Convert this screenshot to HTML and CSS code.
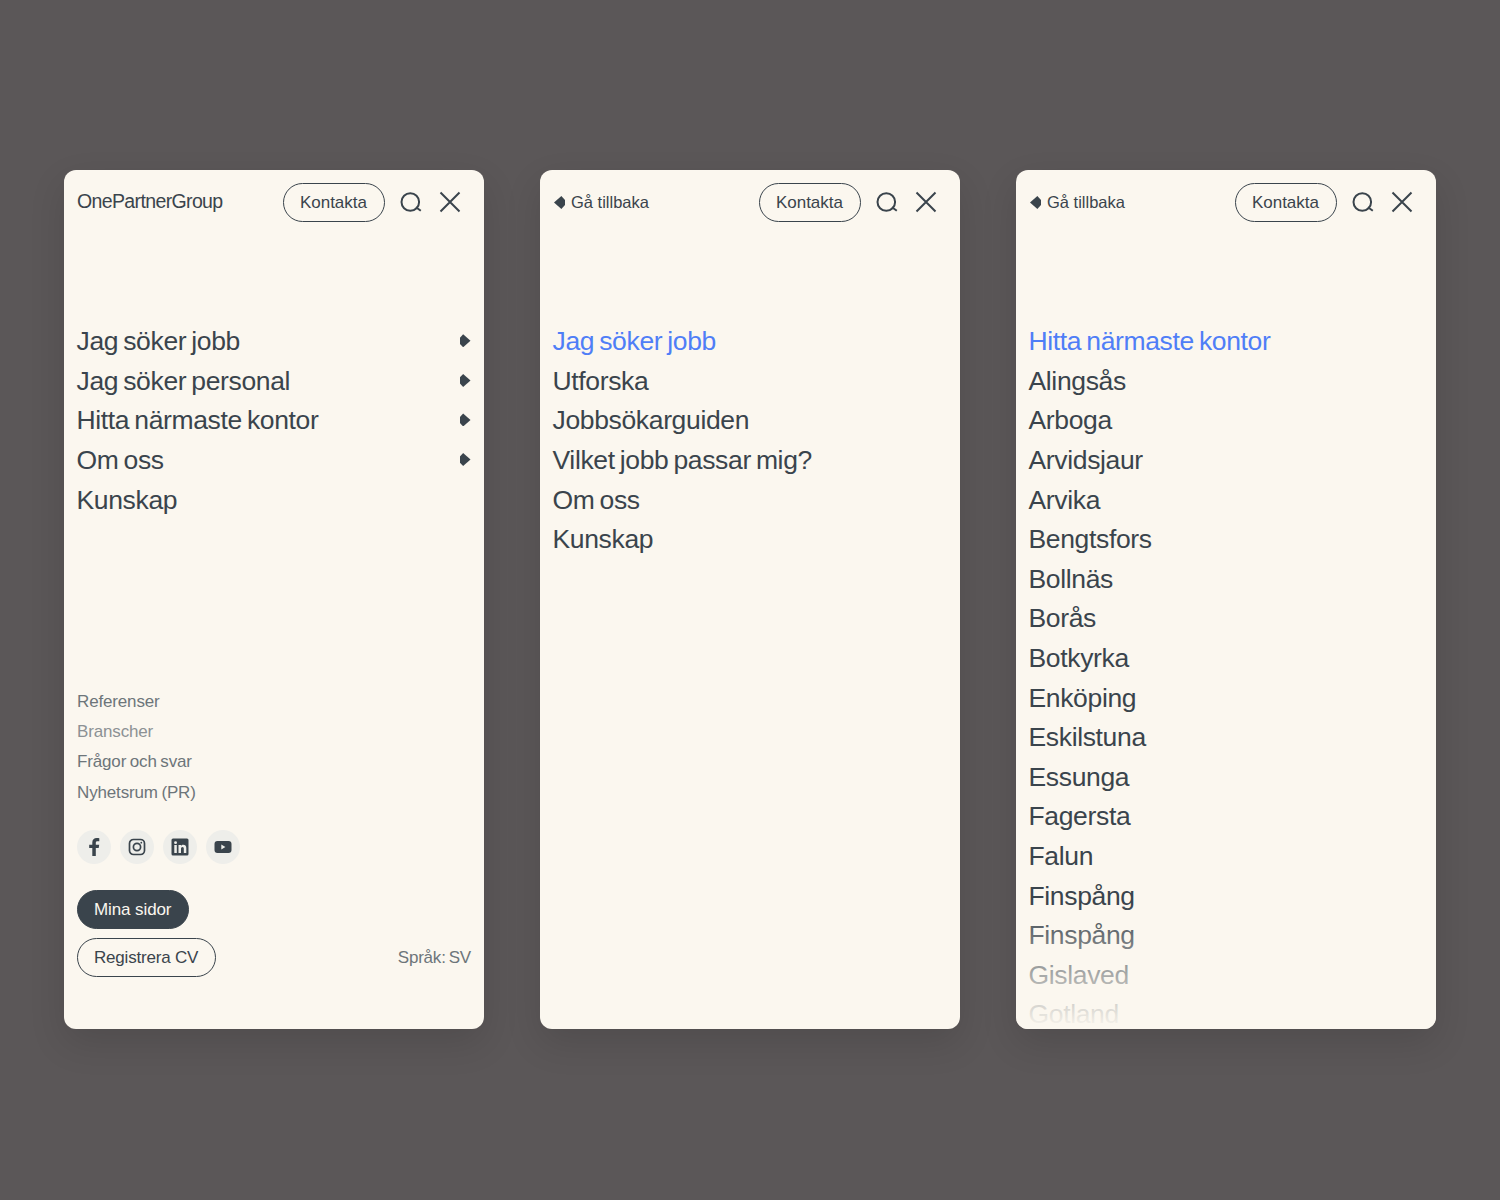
FILE: index.html
```html
<!DOCTYPE html>
<html lang="sv">
<head>
  <meta charset="UTF-8" />
  <title>OnePartnerGroup - Meny</title>
  <link rel="stylesheet" href="styles.css">
</head>
<body>
  <div class="screens">

    <section class="card">
      <header class="top">
        <span class="logo">OnePartnerGroup</span>
        <a class="pill" href="#">Kontakta</a>
        <svg class="icon search" viewBox="0 0 22 22"><circle cx="10.300" cy="11" r="8.800"/><path d="M16 16.300l4.800 3.500"/></svg>
        <svg class="icon close" viewBox="0 0 22 22"><path d="M1.500 1.500l19 19M20.500 1.500l-19 19"/></svg>
      </header>
      <ul class="menu">
        <li>Jag söker jobb<i class="arrow"></i></li>
        <li>Jag söker personal<i class="arrow"></i></li>
        <li>Hitta närmaste kontor<i class="arrow"></i></li>
        <li>Om oss<i class="arrow"></i></li>
        <li>Kunskap</li>
      </ul>
      <footer class="bottom">
        <ul class="links">
          <li>Referenser</li>
          <li class="dim">Branscher</li>
          <li>Frågor och svar</li>
          <li>Nyhetsrum (PR)</li>
        </ul>
        <div class="social">
          <a href="#"><svg viewBox="0 0 20 20"><path d="M11.800 19v-8h2.900l.5-3.300h-3.400V5.800c0-1 .4-1.600 1.700-1.600h1.800V1.200C14.700 1.100 13.700 1 12.700 1 10.100 1 8.300 2.600 8.300 5.400v2.300H5.200V11h3.100v8z"/></svg></a>
          <a href="#"><svg class="line" viewBox="0 0 20 20"><rect x="2.500" y="2.500" width="15" height="15" rx="4"/><circle cx="10" cy="10" r="3.600"/><circle class="dot" cx="14.300" cy="5.700" r=".9"/></svg></a>
          <a href="#"><svg viewBox="0 0 20 20"><path fill-rule="evenodd" d="M3 1.500h14A1.500 1.500 0 0 1 18.500 3v14a1.500 1.500 0 0 1-1.500 1.500H3A1.500 1.500 0 0 1 1.500 17V3A1.500 1.500 0 0 1 3 1.500zM4.300 8v8h2.500V8zm1.250-3.800a1.450 1.450 0 1 0 0 2.900 1.450 1.450 0 0 0 0-2.900zM8.500 8v8H11v-4.200c0-1.200.6-1.900 1.500-1.900s1.300.7 1.300 1.900V16h2.500v-4.900c0-2.200-1.200-3.300-3-3.300-1.100 0-1.900.5-2.300 1.200V8z"/></svg></a>
          <a href="#"><svg viewBox="0 0 20 20"><path fill-rule="evenodd" d="M4.500 4h11A3 3 0 0 1 18.500 7v6a3 3 0 0 1-3 3h-11a3 3 0 0 1-3-3V7a3 3 0 0 1 3-3zM8.300 7.600v4.800L12.400 10z"/></svg></a>
        </div>
        <a class="pill solid" href="#">Mina sidor</a>
        <div class="last-row">
          <a class="pill" href="#">Registrera CV</a>
          <span class="lang">Språk: SV</span>
        </div>
      </footer>
    </section>

    <section class="card">
      <header class="top">
        <a class="back" href="#"><i class="arrow left"></i>Gå tillbaka</a>
        <a class="pill" href="#">Kontakta</a>
        <svg class="icon search" viewBox="0 0 22 22"><circle cx="10.300" cy="11" r="8.800"/><path d="M16 16.300l4.800 3.500"/></svg>
        <svg class="icon close" viewBox="0 0 22 22"><path d="M1.500 1.500l19 19M20.500 1.500l-19 19"/></svg>
      </header>
      <ul class="menu">
        <li class="active">Jag söker jobb</li>
        <li>Utforska</li>
        <li>Jobbsökarguiden</li>
        <li>Vilket jobb passar mig?</li>
        <li>Om oss</li>
        <li>Kunskap</li>
      </ul>
    </section>

    <section class="card fade">
      <header class="top">
        <a class="back" href="#"><i class="arrow left"></i>Gå tillbaka</a>
        <a class="pill" href="#">Kontakta</a>
        <svg class="icon search" viewBox="0 0 22 22"><circle cx="10.300" cy="11" r="8.800"/><path d="M16 16.300l4.800 3.500"/></svg>
        <svg class="icon close" viewBox="0 0 22 22"><path d="M1.500 1.500l19 19M20.500 1.500l-19 19"/></svg>
      </header>
      <ul class="menu">
        <li class="active">Hitta närmaste kontor</li>
        <li>Alingsås</li>
        <li>Arboga</li>
        <li>Arvidsjaur</li>
        <li>Arvika</li>
        <li>Bengtsfors</li>
        <li>Bollnäs</li>
        <li>Borås</li>
        <li>Botkyrka</li>
        <li>Enköping</li>
        <li>Eskilstuna</li>
        <li>Essunga</li>
        <li>Fagersta</li>
        <li>Falun</li>
        <li>Finspång</li>
        <li>Finspång</li>
        <li>Gislaved</li>
        <li>Gotland</li>
      </ul>
    </section>

  </div>
</body>
</html>
```

FILE: styles.css
```css
:root {
  --bg-color: #5b5758;
  --card-bg: #fbf7ef;
  --text-color: #3a444c;
  --muted: #6d757a;
  --blue: #4f7ef7;
}

* {
  box-sizing: border-box;
}

body {
  margin: 0;
  height: 1200px;
  overflow: hidden;
  background-color: var(--bg-color);
  color: var(--text-color);
  font-family: "Liberation Sans", Arial, sans-serif;
}

a {
  color: inherit;
  text-decoration: none;
}

ul {
  list-style: none;
  margin: 0;
  padding: 0;
}

.screens {
  display: flex;
  justify-content: center;
  gap: 56px;
  padding-top: 170px;
}

.card {
  position: relative;
  display: flex;
  flex-direction: column;
  width: 420px;
  height: 859px;
  padding: 13px 13px 52px;
  overflow: hidden;
  border-radius: 12px;
  background-color: var(--card-bg);
  box-shadow: 0 14px 36px rgba(0,0,0,0.12);
}

/* list runs out under the bottom edge */
.card.fade::after {
  content: "";
  position: absolute;
  left: 0;
  right: 0;
  bottom: 0;
  height: 125px;
  background: linear-gradient(to bottom, rgba(251,247,239,0), var(--card-bg));
}

.top {
  display: flex;
  align-items: center;
  height: 39px;
}

.logo {
  margin-right: auto;
  margin-top: -3px;
  font-size: 19.500px;
  letter-spacing: -0.63px;
}

.back {
  display: flex;
  align-items: center;
  gap: 6px;
  margin-left: 1px;
  margin-right: auto;
  font-size: 16.500px;
  letter-spacing: 0;
}

.pill {
  display: inline-flex;
  align-items: center;
  height: 39px;
  padding: 0 17px 0 16px;
  border: 1px solid var(--text-color);
  border-radius: 20px;
  font-size: 17px;
  letter-spacing: -0.2px;
}

.top .pill {
  letter-spacing: 0;
}

.pill.solid {
  align-self: flex-start;
  background-color: var(--text-color);
  color: var(--card-bg);
  letter-spacing: -0.1px;
}

.icon {
  width: 22px;
  height: 22px;
  margin-top: -2px;
  fill: none;
  stroke: var(--text-color);
  stroke-width: 2;
}

.search {
  margin-left: 15px;
}

.close {
  margin-left: 17px;
  margin-right: 10px;
}

.arrow {
  width: 11px;
  height: 13px;
  background-color: var(--text-color);
  clip-path: polygon(0 30%, 33% 0, 100% 50%, 33% 100%, 0 70%);
}

.menu li .arrow {
  margin-top: -2px;
  margin-right: 0.5px;
}

.arrow.left {
  transform: scaleX(-1);
}

.menu {
  margin-top: 100px;
  margin-left: -0.5px;
}

.menu li {
  display: flex;
  align-items: center;
  justify-content: space-between;
  height: 39.6px;
  font-size: 26.500px;
  letter-spacing: -0.35px;
  word-spacing: -2px;
  white-space: nowrap;
}

.menu li.active {
  color: var(--blue);
}

.bottom {
  display: flex;
  flex-direction: column;
  margin-top: auto;
}

.links li {
  display: flex;
  align-items: center;
  height: 30.400px;
  font-size: 17px;
  letter-spacing: -0.15px;
  word-spacing: -1px;
  color: var(--muted);
}

.links li.dim {
  color: #8c9194;
}

.social {
  display: flex;
  gap: 9px;
  margin: 22px 0 26px;
}

.social a {
  display: flex;
  align-items: center;
  justify-content: center;
  width: 34px;
  height: 34px;
  border-radius: 50%;
  background-color: #eeeeea;
}

.social svg {
  width: 20px;
  height: 20px;
  fill: var(--text-color);
}

.social svg.line {
  fill: none;
  stroke: var(--text-color);
  stroke-width: 1.700;
}

.social .dot {
  fill: var(--text-color);
  stroke: none;
}

.last-row {
  display: flex;
  align-items: center;
  justify-content: space-between;
  margin-top: 9px;
}

.lang {
  font-size: 17px;
  letter-spacing: -0.2px;
  word-spacing: -1.500px;
  color: var(--muted);
}
```
